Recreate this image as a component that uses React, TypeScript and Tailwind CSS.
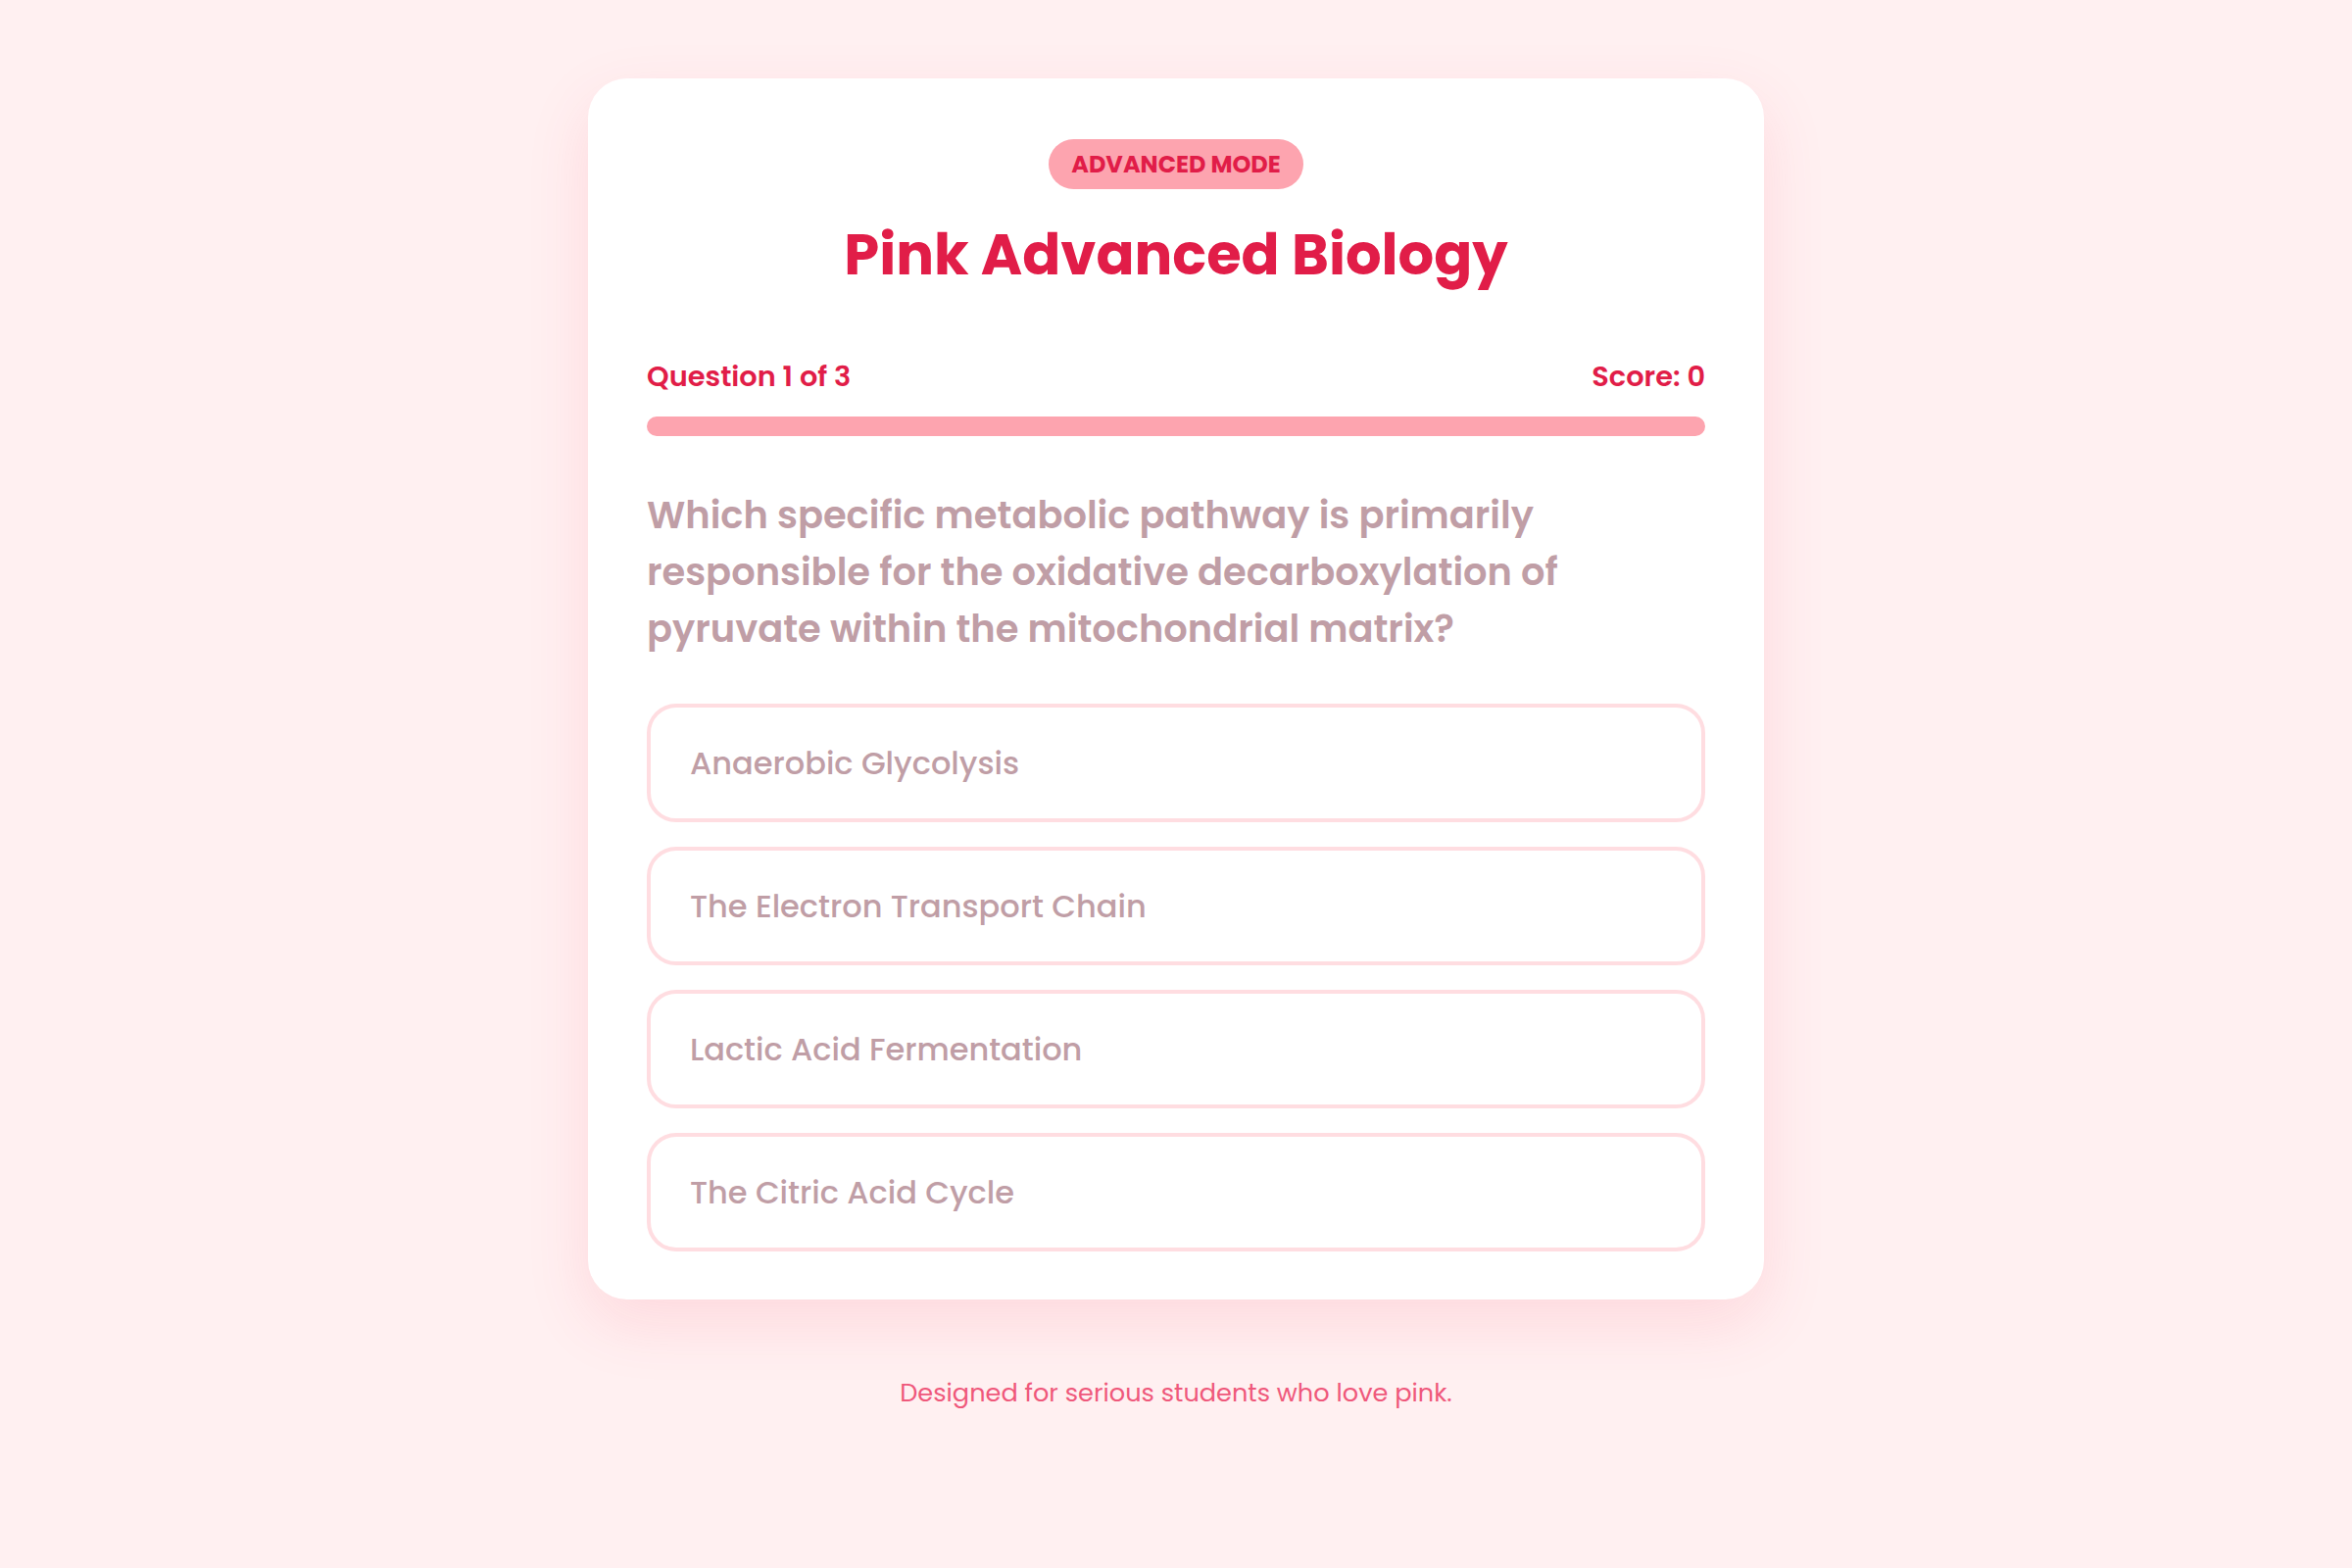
const options = [
  'Anaerobic Glycolysis',
  'The Electron Transport Chain',
  'Lactic Acid Fermentation',
  'The Citric Acid Cycle',
]

export default function App() {
  const current = 1
  const total = 3
  const score = 0

  return (
    <div
      className="min-h-screen w-full bg-[#fff0f1] flex flex-col items-center pt-[80px] pb-20"
      style={{ fontFamily: 'Poppins, Inter, "Noto Sans", sans-serif' }}
    >
      {/* Quiz card */}
      <div className="w-[1200px] bg-white rounded-[40px] px-[60px] pt-[62px] pb-[49px] shadow-[0_24px_64px_rgba(244,63,94,0.13)]">
        <div className="flex flex-col items-center">
          <span className="inline-flex items-center h-[51px] px-[23px] rounded-full bg-[#fda4af] text-[#e11d48] text-[24px] font-bold uppercase">
            Advanced Mode
          </span>
          <h1 className="mt-[31px] text-[57.6px] leading-[72px] font-bold text-[#e11d48]">
            Pink Advanced Biology
          </h1>
        </div>

        <div className="mt-[68px] flex items-center justify-between text-[28.8px] leading-[40px] font-semibold text-[#e11d48]">
          <span>
            Question {current} of {total}
          </span>
          <span>Score: {score}</span>
        </div>

        <div className="mt-[21px] h-[20px] w-full rounded-full bg-[#fda4af]" />

        <p className="mt-[52px] text-[38.4px] leading-[58px] font-semibold text-[#c09ea6] max-w-[960px]">
          Which specific metabolic pathway is primarily responsible for the oxidative decarboxylation of
          pyruvate within the mitochondrial matrix?
        </p>

        <div className="mt-[47px] flex flex-col gap-[25px]">
          {options.map((opt) => (
            <button
              key={opt}
              className="h-[121px] w-full text-left px-[40px] rounded-[30px] border-4 border-[#ffdde1] bg-white text-[32px] font-medium text-[#c09ea6]"
            >
              {opt}
            </button>
          ))}
        </div>
      </div>

      <p className="mt-[76px] text-[25.6px] leading-[39px] text-[#ef587b]">
        Designed for serious students who love pink.
      </p>
    </div>
  )
}
